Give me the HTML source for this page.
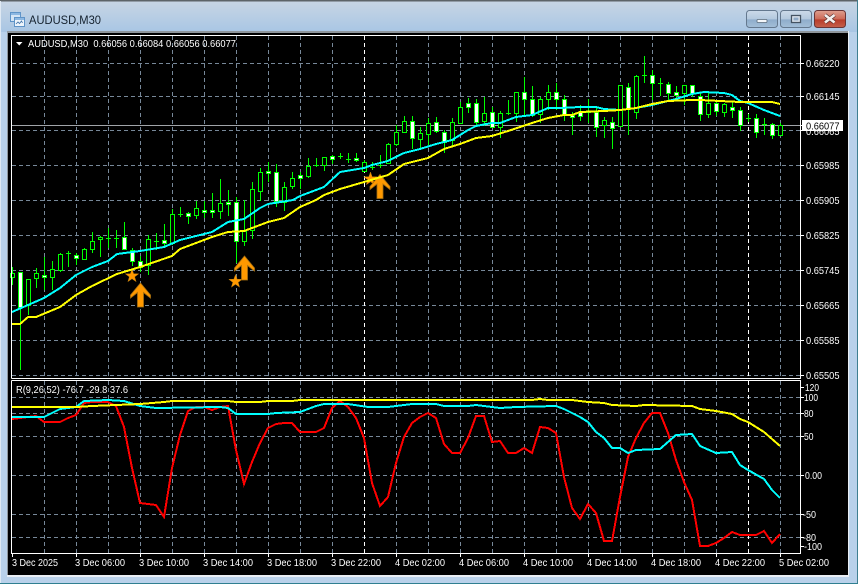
<!DOCTYPE html>
<html lang="en"><head><meta charset="utf-8"><title>AUDUSD,M30</title>
<style>
html,body{margin:0;padding:0;width:858px;height:584px;overflow:hidden;background:#b9d1ea}
svg{display:block;position:absolute;left:0;top:0}
text{font-family:"Liberation Sans",Arial,sans-serif}
</style></head><body>
<svg width="858" height="584" viewBox="0 0 858 584" xmlns="http://www.w3.org/2000/svg">
<defs>
<linearGradient id="tb" x1="0" y1="0" x2="0" y2="1"><stop offset="0" stop-color="#c9d6e4"/><stop offset="1" stop-color="#a9c6e4"/></linearGradient>
<linearGradient id="bb" x1="0" y1="0" x2="0" y2="1"><stop offset="0" stop-color="#ccdae9"/><stop offset=".5" stop-color="#b4c9de"/><stop offset=".55" stop-color="#8fadcb"/><stop offset="1" stop-color="#a4bfd8"/></linearGradient>
<linearGradient id="rb" x1="0" y1="0" x2="0" y2="1"><stop offset="0" stop-color="#dfa090"/><stop offset=".5" stop-color="#cc6a58"/><stop offset=".55" stop-color="#b83c2a"/><stop offset="1" stop-color="#c4604c"/></linearGradient>
</defs>
<!-- window frame -->
<rect x="0" y="0" width="858" height="584" fill="#b9d1ea"/>
<rect x="0" y="0" width="858" height="32" fill="url(#tb)"/>
<rect x="0" y="0" width="858" height="1.5" fill="#5d6468"/>
<rect x="857" y="0" width="1" height="584" fill="#3f7f90"/>
<rect x="0" y="583" width="858" height="1" fill="#2f7f90"/>
<rect x="0" y="1" width="1" height="582" fill="#dfe9f3"/>
<rect x="7" y="31" width="842" height="546" fill="#e9eef4"/>
<rect x="7" y="31" width="841" height="2" fill="#8f969c"/>
<rect x="7" y="31" width="1" height="544" fill="#8f969c"/>
<rect x="8" y="33" width="840" height="542" fill="#000"/>
<!-- title icon -->
<g shape-rendering="crispEdges">
<rect x="10.5" y="12.5" width="10" height="9" fill="#d5e5f5" stroke="#5f94c8"/>
<rect x="11" y="13" width="9" height="2" fill="#8db8e2"/>
<rect x="14.5" y="17.5" width="10" height="9" fill="#eef5fc" stroke="#5f94c8"/>
<rect x="15" y="18" width="9" height="2" fill="#8db8e2"/>
</g>
<path d="M16 24l2-2 1.500 1.500 2-2.500 1 2" fill="none" stroke="#3a6ea5" stroke-width=".8"/>
<text x="29" y="24" font-size="12" fill="#15222f" textLength="72" lengthAdjust="spacingAndGlyphs">AUDUSD,M30</text>
<!-- buttons -->
<rect x="746.500" y="10.500" width="31" height="17" rx="3" fill="url(#bb)" stroke="#64788e"/>
<rect x="780.500" y="10.500" width="31" height="17" rx="3" fill="url(#bb)" stroke="#64788e"/>
<rect x="814.500" y="10.500" width="31" height="17" rx="3" fill="url(#rb)" stroke="#6a3536"/>
<rect x="757" y="19.500" width="10" height="3" rx="1" fill="#f4f7fa" stroke="#5a6a7a" stroke-width=".8"/>
<rect x="791.500" y="15.500" width="9" height="7" fill="#dfe7ef" stroke="#445362" stroke-width="1.300"/>
<rect x="793.500" y="17.500" width="5" height="3" fill="#8faac6"/>
<path d="M825 15l9.500 7.500M834.500 15l-9.500 7.500" stroke="#4c2a2a" stroke-width="3.800" fill="none"/>
<path d="M825 15l9.500 7.500M834.500 15l-9.500 7.500" stroke="#f4f0ee" stroke-width="2.700" fill="none"/>
<!-- grid -->
<g fill="none" stroke="#778899" stroke-width="1" stroke-dasharray="4 3" shape-rendering="crispEdges">
<path d="M12 63.500H800M12 96.500H800M12 130.500H800M12 165.500H800M12 200.500H800M12 235.500H800M12 270.500H800M12 305.500H800M12 340.500H800M12 375.500H800"/>
<path d="M12 397.500H800M12 413.500H800M12 436.500H800M12 475.500H800M12 514.500H800M12 537.500H800"/>
<path d="M44.500 36V378M76.500 36V378M108.500 36V378M140.500 36V378M172.500 36V378M204.500 36V378M236.500 36V378M268.500 36V378M300.500 36V378M332.500 36V378M396.500 36V378M428.500 36V378M460.500 36V378M492.500 36V378M524.500 36V378M556.500 36V378M588.500 36V378M620.500 36V378M652.500 36V378M684.500 36V378M716.500 36V378M780.500 36V378"/>
<path d="M44.500 381V553M76.500 381V553M108.500 381V553M140.500 381V553M172.500 381V553M204.500 381V553M236.500 381V553M268.500 381V553M300.500 381V553M332.500 381V553M396.500 381V553M428.500 381V553M460.500 381V553M492.500 381V553M524.500 381V553M556.500 381V553M588.500 381V553M620.500 381V553M652.500 381V553M684.500 381V553M716.500 381V553M780.500 381V553"/>
</g>
<g fill="none" stroke="#fff" stroke-width="1" stroke-dasharray="4 3" shape-rendering="crispEdges">
<path d="M364.500 36V378M748.500 36V378M364.500 381V553M748.500 381V553"/>
</g>
<!-- price line -->
<path d="M12 125.500H800" stroke="#a0a4a8" stroke-width="1" shape-rendering="crispEdges"/>
<!-- candles -->
<g shape-rendering="crispEdges" stroke="#00ff00" stroke-width="1" fill="none">
<path d="M12.500 267V285M20.500 272V370M28.500 279V315M36.500 268V288M44.500 257V290M52.500 261V290M60.500 253V272M68.500 251V267M76.500 253V265M84.500 248V259M92.500 232V253M100.500 236V257M108.500 228V248M116.500 230V248M124.500 222V250M132.500 248V266M140.500 256V272M148.500 235V275M156.500 233V250M164.500 224V248M172.500 209V245M180.500 207V217M188.500 212V224M196.500 201V219M204.500 201V218M212.500 193V218M220.500 179V219M228.500 190V216M236.500 197V263M244.500 200V246M252.500 182V239M260.500 168V201M268.500 162V182M276.500 164V207M284.500 182V211M292.500 172V189M300.500 172V189M308.500 158V178M316.500 158V167M324.500 157V171M332.500 155V164M340.500 153V159M348.500 153V163M356.500 153V162M364.500 160V172M372.500 162V170M380.500 155V168M388.500 143V163M396.500 125V146M404.500 116V132M412.500 116V149M420.500 127V149M428.500 118V145M436.500 117V133M444.500 130V153M452.500 118V147M460.500 102V123M468.500 98V113M476.500 99V125M484.500 97V126M492.500 107V128M500.500 111V138M508.500 100V115M516.500 92V122M524.500 77V117M532.500 86V117M540.500 97V123M548.500 85V110M556.500 83V110M564.500 95V121M572.500 112V135M580.500 105V121M588.500 99V123M596.500 107V137M604.500 117V138M612.500 117V149M620.500 85V127M628.500 83V135M636.500 75V119M644.500 56V83M652.500 70V100M660.500 78V96M668.500 82V100M676.500 86V98M684.500 85V105M692.500 85V97M700.500 92V121M708.500 92V118M716.500 100V116M724.500 103V117M732.500 102V118M740.500 107V131M748.500 114V122M756.500 114V138M764.500 118V135M772.500 123V139M780.500 123V135"/>
<path d="M66 253.500h5M106 238.500h5M114 238.500h5M154 241.500h5M178 214.500h5M314 165.500h5M338 156.500h5M346 159.500h5M370 167.500h5M378 165.500h5M506 113.500h5M586 112.500h5M642 75.500h5M658 83.500h5M746 118.500h5M762 124.500h5"/>
<path fill="#000" d="M10.500 273.500h4v4h-4zM26.500 279.500h4v26h-4zM34.500 273.500h4v5h-4zM50.500 269.500h4v8h-4zM58.500 254.500h4v16h-4zM82.500 249.500h4v10h-4zM90.500 241.500h4v8h-4zM98.500 237.500h4v2h-4zM146.500 239.500h4v26h-4zM170.500 214.500h4v29h-4zM194.500 208.500h4v7h-4zM218.500 203.500h4v8h-4zM242.500 231.500h4v10h-4zM250.500 189.500h4v41h-4zM258.500 172.500h4v19h-4zM282.500 187.500h4v15h-4zM290.500 178.500h4v8h-4zM306.500 166.500h4v10h-4zM322.500 157.500h4v8h-4zM362.500 162.500h4v9h-4zM386.500 144.500h4v19h-4zM394.500 132.500h4v12h-4zM402.500 121.500h4v11h-4zM418.500 133.500h4v6h-4zM426.500 123.500h4v11h-4zM450.500 122.500h4v18h-4zM458.500 107.500h4v16h-4zM482.500 113.500h4v8h-4zM498.500 113.500h4v14h-4zM514.500 92.500h4v21h-4zM538.500 99.500h4v15h-4zM546.500 92.500h4v7h-4zM602.500 120.500h4v5h-4zM618.500 85.500h4v41h-4zM634.500 76.500h4v36h-4zM682.500 85.500h4v8h-4zM706.500 103.500h4v11h-4zM722.500 104.500h4v8h-4zM778.500 125.500h4v10h-4z"/>
<path fill="#fff" d="M18.500 272.500h4v35h-4zM42.500 275.500h4v2h-4zM74.500 255.500h4v3h-4zM122.500 237.500h4v12h-4zM130.500 250.500h4v11h-4zM138.500 261.500h4v6h-4zM162.500 240.500h4v3h-4zM186.500 213.500h4v3h-4zM202.500 210.500h4v2h-4zM210.500 210.500h4v2h-4zM226.500 202.500h4v2h-4zM234.500 202.500h4v39h-4zM266.500 171.500h4v2h-4zM274.500 172.500h4v29h-4zM298.500 175.500h4v3h-4zM330.500 156.500h4v3h-4zM354.500 158.500h4v2h-4zM410.500 121.500h4v17h-4zM434.500 122.500h4v9h-4zM442.500 132.500h4v10h-4zM466.500 103.500h4v4h-4zM474.500 103.500h4v19h-4zM490.500 112.500h4v15h-4zM522.500 92.500h4v7h-4zM530.500 99.500h4v16h-4zM554.500 92.500h4v7h-4zM562.500 99.500h4v16h-4zM570.500 115.500h4v2h-4zM578.500 112.500h4v4h-4zM594.500 112.500h4v15h-4zM610.500 122.500h4v6h-4zM626.500 87.500h4v22h-4zM650.500 75.500h4v8h-4zM666.500 84.500h4v9h-4zM674.500 92.500h4v3h-4zM690.500 85.500h4v8h-4zM698.500 96.500h4v18h-4zM714.500 103.500h4v8h-4zM730.500 107.500h4v3h-4zM738.500 110.500h4v15h-4zM754.500 118.500h4v14h-4zM770.500 124.500h4v11h-4z"/>
</g>
<!-- stars -->
<g fill="#ff9900" stroke="#b87a10" stroke-width=".5">
<path transform="translate(132 276)" d="M0-7 1.650-2.270 6.660-2.160 2.660.87 4.110 5.660 0 2.800-4.110 5.660-2.660.87-6.660-2.160-1.650-2.270z"/>
<path transform="translate(235.500 281.500)" d="M0-7 1.650-2.270 6.660-2.160 2.660.87 4.110 5.660 0 2.800-4.110 5.660-2.660.87-6.660-2.160-1.650-2.270z"/>
<path transform="translate(370.500 179)" d="M0-7 1.650-2.270 6.660-2.160 2.660.87 4.110 5.660 0 2.800-4.110 5.660-2.660.87-6.660-2.160-1.650-2.270z"/>
</g>
<!-- arrows -->
<g fill="#ff9900" stroke="#a8700f" stroke-width=".8">
<path transform="translate(140.500 283)" d="M0 0 10 12V15L3 9.500V24H-3V9.500L-10 15V12z"/>
<path transform="translate(244.500 256)" d="M0 0 10 12V15L3 9.500V24H-3V9.500L-10 15V12z"/>
<path transform="translate(380 174.500)" d="M0 0 10 12V15L3 9.500V24H-3V9.500L-10 15V12z"/>
</g>
<!-- main lines -->
<g fill="none" stroke-width="2" shape-rendering="crispEdges">
<polyline stroke="#00ffff" points="12,312 44,298 60,288 76,275 92,267 108,261 117,254 140,251 164,247 180,240 212,232 228,222 244,219 260,208 268,204 293,200 300,196 324,187 340,172 364,168 372,165 388,161 404,153 420,149 436,144 452,140 468,130 476,126 492,123 500,123 516,117 532,115 548,108 560,108 580,107 596,107 604,109 620,110 636,108 652,105 668,101 676,99 692,94 704,92 724,93 732,95 740,101 748,103 764,110 780,116"/>
<polyline stroke="#ffff00" points="12,324 20,324 28,317 36,317 60,307 76,295 92,286 117,274 140,267 172,256 180,249 212,237 228,232 244,231 268,222 284,218 300,207 316,200 324,195 340,189 364,182 388,175 404,164 428,158 444,149 460,144 476,138 492,136 508,131 532,123 548,118 564,115 572,115 580,112 604,111 620,110 636,108 652,104 668,101 692,100 700,100 740,102 772,102 780,104"/>
</g>
<!-- indicator lines -->
<g fill="none" stroke-width="2" shape-rendering="crispEdges">
<polyline stroke="#ff0000" points="12,419 20,418 28,417 36,416 44,422 60,422 68,418 76,415 84,403 92,402 108,402 116,406 124,427 132,468 140,503 156,505 164,517 172,468 180,435 188,411 196,407 204,407 212,410 220,407 228,406 236,450 244,484 252,462 260,443 268,428 276,424 284,423 292,423 300,432 316,432 324,428 332,408 340,401 348,407 356,418 364,438 372,483 380,506 388,497 396,463 404,437 412,423 420,417 428,413 436,418 444,444 452,453 460,453 468,438 476,416 484,416 492,442 500,441 508,453 516,453 524,448 532,453 540,427 548,428 556,433 564,477 572,508 580,519 588,504 596,513 604,541 612,541 620,497 628,457 636,438 644,423 652,413 660,413 668,433 676,460 684,482 692,500 700,546 708,546 716,543 724,538 732,532 740,535 756,535 764,531 772,543 780,534"/>
<polyline stroke="#00ffff" points="12,417 44,417 60,409 76,407 84,401 108,400 124,401 140,406 156,408 220,407 228,408 236,414 268,414 276,413 300,412 316,406 324,404 348,404 368,407 388,407 412,404 436,404 444,406 468,406 476,405 500,408 516,407 556,406 564,409 580,417 588,422 596,432 604,438 612,448 620,448 628,453 636,450 660,449 668,442 676,435 692,434 700,446 716,453 732,452 740,465 748,470 764,479 772,490 780,498"/>
<polyline stroke="#ffff00" points="12,407 76,407 92,406 116,405 140,404 164,402 172,401 228,401 236,402 260,402 268,401 292,401 300,400 532,400 540,399 548,400 572,400 580,401 588,402 604,403 612,405 636,406 644,405 692,406 700,409 716,411 732,414 740,419 748,422 764,432 780,446"/>
</g>
<!-- chart borders and ticks -->
<g fill="none" stroke="#fff" stroke-width="1" shape-rendering="crispEdges">
<path d="M11.500 378.500V35.500H800.500V378.500H11.500"/>
<path d="M11.500 380.500H800.500V553.500H11.500V380.500"/>
<path d="M801 63.500h3M801 96.500h3M801 130.500h3M801 165.500h3M801 200.500h3M801 235.500h3M801 270.500h3M801 305.500h3M801 340.500h3M801 375.500h3"/>
<path d="M801 387.500h3M801 397.500h3M801 413.500h3M801 436.500h3M801 475.500h3M801 514.500h3M801 537.500h3M801 546.500h3"/>
<path d="M12.500 554v3M76.500 554v3M140.500 554v3M204.500 554v3M268.500 554v3M332.500 554v3M396.500 554v3M460.500 554v3M524.500 554v3M588.500 554v3M652.500 554v3M716.500 554v3M780.500 554v3"/>
</g>
<!-- text -->
<path d="M16 42h6.500l-3.250 3.500z" fill="#fff"/>
<g font-size="10.500" fill="#fff">
<text x="28" y="47" xml:space="preserve" textLength="208" lengthAdjust="spacingAndGlyphs">AUDUSD,M30  0.66056 0.66084 0.66056 0.66077</text>
<text x="16" y="393" textLength="112" lengthAdjust="spacingAndGlyphs">R(9,26,52) -76.7 -29.8 37.6</text>
<text x="806" y="67" textLength="33.500" lengthAdjust="spacingAndGlyphs">0.66220</text>
<text x="806" y="100" textLength="33.500" lengthAdjust="spacingAndGlyphs">0.66145</text>
<text x="806" y="135" textLength="33.500" lengthAdjust="spacingAndGlyphs">0.66065</text>
<text x="806" y="169" textLength="33.500" lengthAdjust="spacingAndGlyphs">0.65985</text>
<text x="806" y="204" textLength="33.500" lengthAdjust="spacingAndGlyphs">0.65905</text>
<text x="806" y="239" textLength="33.500" lengthAdjust="spacingAndGlyphs">0.65825</text>
<text x="806" y="274" textLength="33.500" lengthAdjust="spacingAndGlyphs">0.65745</text>
<text x="806" y="309" textLength="33.500" lengthAdjust="spacingAndGlyphs">0.65665</text>
<text x="806" y="344" textLength="33.500" lengthAdjust="spacingAndGlyphs">0.65585</text>
<text x="806" y="379" textLength="33.500" lengthAdjust="spacingAndGlyphs">0.65505</text>
<text x="805" y="391" textLength="14" lengthAdjust="spacingAndGlyphs">120</text>
<text x="804" y="401" textLength="14" lengthAdjust="spacingAndGlyphs">100</text>
<text x="804" y="417" textLength="9.500" lengthAdjust="spacingAndGlyphs">80</text>
<text x="804" y="440" textLength="9.500" lengthAdjust="spacingAndGlyphs">50</text>
<text x="805" y="479" textLength="17" lengthAdjust="spacingAndGlyphs">0.00</text>
<text x="803" y="518" textLength="13" lengthAdjust="spacingAndGlyphs">-50</text>
<text x="803" y="541" textLength="13" lengthAdjust="spacingAndGlyphs">-80</text>
<text x="804" y="550" textLength="18" lengthAdjust="spacingAndGlyphs">-100</text>
<text x="12" y="566" textLength="46" lengthAdjust="spacingAndGlyphs">3 Dec 2025</text>
<text x="75" y="566" textLength="50" lengthAdjust="spacingAndGlyphs">3 Dec 06:00</text>
<text x="139" y="566" textLength="50" lengthAdjust="spacingAndGlyphs">3 Dec 10:00</text>
<text x="203" y="566" textLength="50" lengthAdjust="spacingAndGlyphs">3 Dec 14:00</text>
<text x="267" y="566" textLength="50" lengthAdjust="spacingAndGlyphs">3 Dec 18:00</text>
<text x="331" y="566" textLength="50" lengthAdjust="spacingAndGlyphs">3 Dec 22:00</text>
<text x="395" y="566" textLength="50" lengthAdjust="spacingAndGlyphs">4 Dec 02:00</text>
<text x="459" y="566" textLength="50" lengthAdjust="spacingAndGlyphs">4 Dec 06:00</text>
<text x="523" y="566" textLength="50" lengthAdjust="spacingAndGlyphs">4 Dec 10:00</text>
<text x="587" y="566" textLength="50" lengthAdjust="spacingAndGlyphs">4 Dec 14:00</text>
<text x="651" y="566" textLength="50" lengthAdjust="spacingAndGlyphs">4 Dec 18:00</text>
<text x="715" y="566" textLength="50" lengthAdjust="spacingAndGlyphs">4 Dec 22:00</text>
<text x="779" y="566" textLength="50" lengthAdjust="spacingAndGlyphs">5 Dec 02:00</text>
</g>
<!-- current price tag -->
<rect x="802" y="120" width="41" height="11" fill="#fff"/>
<path d="M801 125.500h2" stroke="#fff" shape-rendering="crispEdges"/>
<text x="806" y="129.500" font-size="10.500" fill="#000" textLength="33.500" lengthAdjust="spacingAndGlyphs">0.66077</text>
</svg>
</body></html>
